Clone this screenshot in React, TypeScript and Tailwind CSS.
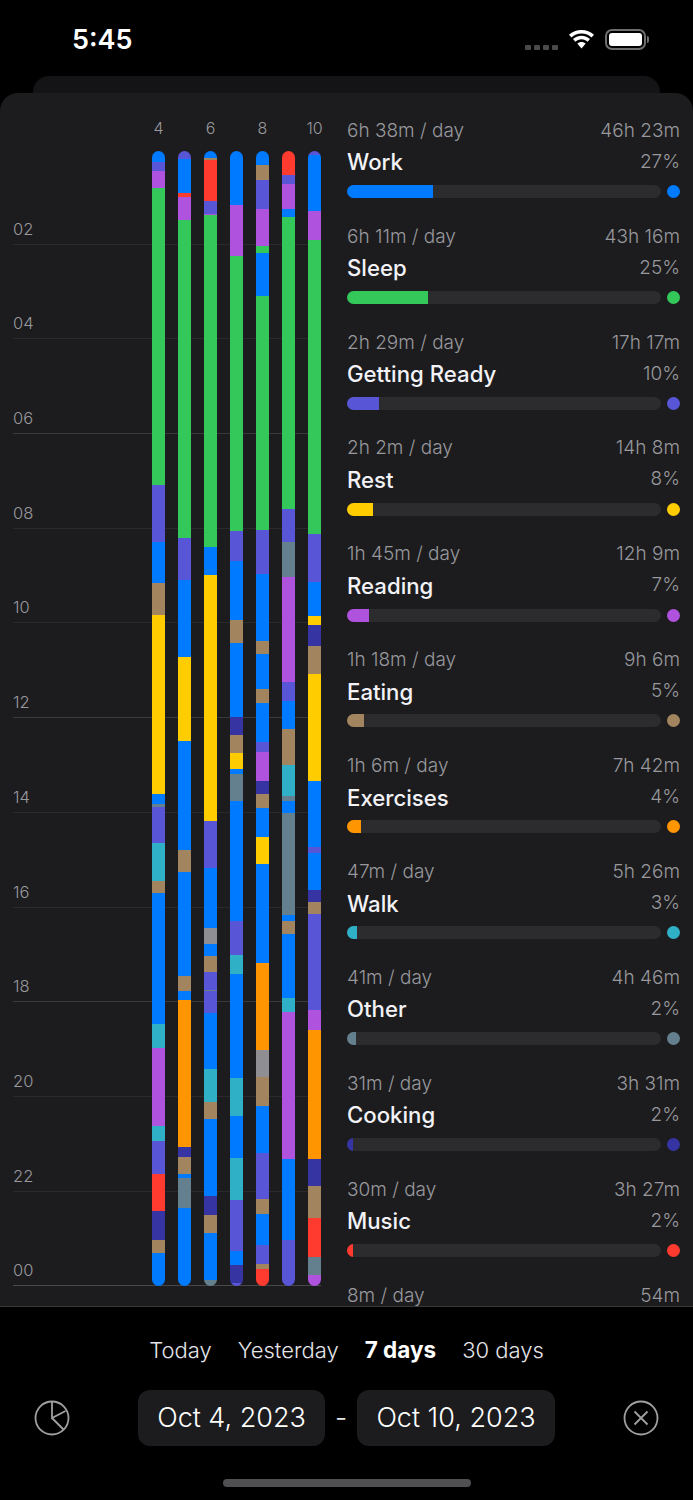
const B = "#007aff", G = "#34c759", I = "#5856d6", P = "#af52de", R = "#ff3b30", Y = "#ffcc00", W = "#a2845e", O = "#ff9500", T = "#30b0c7", S = "#64808f", N = "#3634a3", A = "#8e8e93";

type Seg = [string, number];
const bars: Seg[][] = [
  [[B,162],[I,171],[P,188],[G,485],[I,542],[B,583],[W,615],[Y,794],[B,804],[S,807],[I,843],[T,881],[W,893],[B,1024],[T,1048],[P,1126],[T,1141],[I,1174],[R,1211],[N,1240],[W,1253],[B,1286]],
  [[I,159],[B,193],[R,197],[P,220],[G,538],[I,580],[B,657],[Y,741],[B,850],[W,872],[B,976],[W,991],[B,1000],[O,1147],[N,1157],[W,1174],[B,1178],[S,1208],[B,1286]],
  [[B,158],[W,160],[R,201],[I,214],[P,215],[G,547],[B,575],[Y,821],[I,868],[B,928],[A,944],[B,956],[W,972],[I,990],[S,991],[I,1013],[B,1069],[T,1102],[W,1119],[B,1196],[N,1215],[W,1233],[B,1280],[S,1286]],
  [[B,205],[P,256],[G,531],[I,561],[B,620],[W,643],[B,717],[N,735],[W,753],[Y,769],[B,774],[S,801],[B,921],[I,955],[T,974],[B,1078],[T,1116],[B,1158],[T,1200],[I,1251],[B,1265],[N,1283],[I,1286]],
  [[B,165],[W,180],[I,209],[P,246],[G,253],[B,296],[G,530],[I,574],[B,641],[W,654],[B,689],[W,703],[B,742],[I,752],[P,781],[N,794],[W,808],[B,837],[Y,864],[B,963],[O,1050],[A,1077],[W,1106],[B,1153],[I,1199],[W,1214],[B,1245],[I,1264],[W,1269],[R,1286]],
  [[R,175],[I,184],[P,209],[B,217],[G,509],[I,542],[S,577],[P,682],[I,701],[B,729],[W,765],[T,796],[S,801],[B,813],[S,915],[B,921],[W,934],[B,998],[T,1012],[P,1159],[B,1240],[I,1286]],
  [[I,155],[B,211],[P,240],[G,534],[I,582],[B,616],[Y,625],[N,646],[W,674],[Y,781],[B,847],[I,853],[B,890],[N,902],[W,914],[I,1010],[P,1030],[O,1159],[N,1186],[W,1218],[R,1257],[S,1275],[P,1286]],
];

const rows = [
  ["6h 38m / day","46h 23m","Work","27%",B,86],
  ["6h 11m / day","43h 16m","Sleep","25%",G,81],
  ["2h 29m / day","17h 17m","Getting Ready","10%",I,32],
  ["2h 2m / day","14h 8m","Rest","8%",Y,26],
  ["1h 45m / day","12h 9m","Reading","7%",P,22],
  ["1h 18m / day","9h 6m","Eating","5%",W,17],
  ["1h 6m / day","7h 42m","Exercises","4%",O,14],
  ["47m / day","5h 26m","Walk","3%",T,10],
  ["41m / day","4h 46m","Other","2%",S,9],
  ["31m / day","3h 31m","Cooking","2%",N,6],
  ["30m / day","3h 27m","Music","2%",R,6],
] as const;

const hours = ["02","04","06","08","10","12","14","16","18","20","22","00"];

function Bar({ segs }: { segs: Seg[] }) {
  let prev = 151;
  return (
    <div className="flex w-[13px] flex-col overflow-hidden rounded-full">
      {segs.map(([c, end], i) => {
        const h = end - prev;
        prev = end;
        return <div key={i} style={{ height: h, background: c }} />;
      })}
    </div>
  );
}

function Row({ r }: { r: (typeof rows)[number] }) {
  return (
    <div className="h-[105.900px] pt-[6px]">
      <div className="flex h-[26px] items-center justify-between text-[19px] font-light text-[#98989d]">
        <span>{r[0]}</span>
        <span>{r[1]}</span>
      </div>
      <div className="mt-[5px] flex h-[26px] items-center justify-between">
        <span className="text-[22.200px] font-medium text-[#f2f2f7]">{r[2]}</span>
        <span className="text-[19px] font-light text-[#98989d]">{r[3]}</span>
      </div>
      <div className="mt-[10px] flex items-center justify-between">
        <div className="h-[13px] w-[314px] overflow-hidden rounded-full bg-[#2c2c2e]">
          <div className="h-full" style={{ width: r[5], background: r[4] }} />
        </div>
        <div className="h-[13px] w-[13px] rounded-full" style={{ background: r[4] }} />
      </div>
    </div>
  );
}

export default function App() {
  return (
    <div className="relative h-[1500px] w-[693px] overflow-hidden bg-black font-['Inter','Liberation_Sans',sans-serif] text-white">
      {/* Status bar */}
      <div className="flex h-[76px] items-start justify-between pl-[72px] pr-[44px] pt-[24px]">
        <span className="text-[27px] font-semibold leading-[32px] text-white">5:45</span>
        <div className="flex items-center gap-[10px] pt-[5px]">
          <div className="mt-[16px] flex gap-[3px]">
            {[0,1,2,3].map((i) => <div key={i} className="h-[5px] w-[6px] rounded-[1px] bg-[#4a4a4c]" />)}
          </div>
          <svg width="27" height="19" viewBox="0 0 27 19" fill="white">
            <path d="M13.500 3.500c3.900 0 7.400 1.500 10 4l2.500-2.700C22.700 1.800 18.300 0 13.500 0S4.300 1.800 1 4.800l2.500 2.700c2.600-2.500 6.100-4 10-4z" />
            <path d="M13.500 9.300c2.400 0 4.500.9 6.100 2.400l2.400-2.600c-2.200-2.100-5.200-3.400-8.500-3.400S7.200 7 5 9.100l2.400 2.600c1.600-1.500 3.700-2.400 6.100-2.400z" />
            <path d="M13.500 12c-1.700 0-3.100.6-4.200 1.600l4.200 5 4.200-5c-1.100-1-2.500-1.600-4.200-1.600z" />
          </svg>
          <div className="flex items-center">
            <div className="h-[21px] w-[41px] rounded-[7px] border-2 border-[#6e6e70] p-[2px]">
              <div className="h-full w-full rounded-[3px] bg-white" />
            </div>
            <div className="ml-[1px] h-[7px] w-[2px] rounded-r-full bg-[#6e6e70]" />
          </div>
        </div>
      </div>

      {/* Stacked sheet behind */}
      <div className="mx-[33px] h-[17px] rounded-t-[16px] bg-[#141416]" />

      {/* Main sheet */}
      <div className="h-[1214px] overflow-hidden rounded-t-[18px] border-b border-[#38383a] bg-[#1c1c1e]">
        <div className="flex">
          {/* Chart */}
          <div className="relative h-[1213px] w-[347px] shrink-0">
            <div className="pl-[13px] pr-[26px] pt-[57px]">
              {hours.map((h, i) => (
                <div
                  key={h}
                  className={`flex h-[94.700px] items-end border-b pb-[5px] text-[16.500px] font-light leading-[20px] text-[#98989d] ${
                    i === 11 ? "border-[#48484a]" : i % 3 === 2 ? "border-[#3a3a3c]" : "border-[#2a2a2c]"
                  }`}
                >
                  {h}
                </div>
              ))}
            </div>
            <div className="absolute left-[152px] top-[58px] flex gap-[13px]">
              {bars.map((s, i) => <Bar key={i} segs={s} />)}
            </div>
            <div className="absolute left-[152px] top-[25px] flex w-[169px] text-[16px] font-light leading-[20px] text-[#98989d]">
              {["4","","6","","8","","10"].map((d, i) => (
                <span key={i} className="flex w-[13px] justify-center" style={{ marginRight: i < 6 ? 13 : 0 }}>{d}</span>
              ))}
            </div>
          </div>
          {/* List */}
          <div className="min-w-0 flex-1 pr-[13px] pt-[19px]">
            {rows.map((r) => <Row key={r[2]} r={r} />)}
            <div className="pt-[6px]">
              <div className="flex h-[26px] items-center justify-between text-[19px] font-light text-[#98989d]">
                <span>8m / day</span>
                <span>54m</span>
              </div>
            </div>
          </div>
        </div>
      </div>

      {/* Range tabs */}
      <div className="mt-[28px] flex h-[30px] items-center justify-center gap-[26px] text-[22px] font-light text-[#e5e5ea]">
        <span>Today</span>
        <span>Yesterday</span>
        <span className="text-[22.500px] font-bold text-white">7 days</span>
        <span>30 days</span>
      </div>

      {/* Date controls */}
      <div className="mt-[25px] flex h-[56px] items-center justify-between px-[34px]">
        <svg width="36" height="36" viewBox="0 0 36 36" fill="none" stroke="#a0a0a2" strokeWidth="1.800">
          <circle cx="18" cy="18" r="16.500" />
          <path d="M18 1.500V18l13.500-7M18 18l11.500 11.500" />
        </svg>
        <div className="flex items-center text-[27px] font-light text-white">
          <div className="flex h-[56px] w-[187px] items-center justify-center rounded-[12px] bg-[#1c1c1e]">Oct 4, 2023</div>
          <span className="w-[32px] text-center text-[#e5e5ea]">-</span>
          <div className="flex h-[56px] w-[198px] items-center justify-center rounded-[12px] bg-[#1c1c1e]">Oct 10, 2023</div>
        </div>
        <svg width="36" height="36" viewBox="0 0 36 36" fill="none" stroke="#a0a0a2" strokeWidth="1.800">
          <circle cx="18" cy="18" r="16.500" />
          <path d="M11.500 11.500l13 13M24.500 11.500l-13 13" />
        </svg>
      </div>

      {/* Home indicator */}
      <div className="mx-auto mt-[33px] h-[8px] w-[248px] rounded-full bg-[#505052]" />
    </div>
  );
}
